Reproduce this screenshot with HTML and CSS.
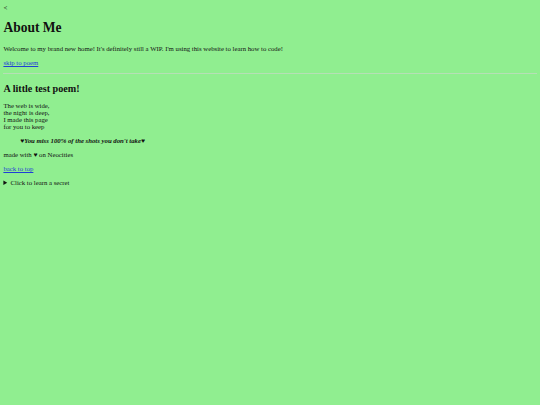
FILE: index.html
```html
<!DOCTYPE html>
<html>
<head>
<meta charset="utf-8">
<link rel="stylesheet" href="styles.css">
</head>
<body class="page">
<div class="back">&lt;</div>
<h1 class="title" id="top">About Me</h1>
<p class="text">Welcome to my brand new home! It's definitely still a WIP. I'm using this website to learn how to code!</p>
<p class="text"><a class="link" href="#poem">skip to poem</a></p>
<hr class="rule">
<h2 class="subtitle" id="poem">A little test poem!</h2>
<p class="text">The web is wide,<br>the night is deep,<br>I made this page<br>for you to keep</p>
<blockquote class="quote"><b><i>♥You miss 100% of the shots you don't take♥</i></b></blockquote>
<p class="text">made with ♥ on Neocities</p>
<p class="text"><a class="link" href="#top">back to top</a></p>
<details class="secret"><summary class="summary">Click to learn a secret</summary><p class="text">Shh!</p></details>
</body>
</html>
```
FILE: styles.css
```css
html { background: #90ee90; }
.page {
  margin: 3.4px;
  padding-top: 1px;
  font-family: "Liberation Serif", "Times New Roman", serif;
  font-size: 6.76px;
  color: #111;
  background: #90ee90;
}
.back { line-height: normal; }
.title { font-size: 2em; margin: 0.67em 0; font-weight: bold; }
.subtitle { font-size: 1.5em; margin: 0.85em 0; font-weight: bold; }
.text { margin: 1.02em 0; }
.link { color: #1f3fd6; text-decoration: underline; }
.rule {
  border: none;
  border-top: 1px solid #b6dfb6;
  height: 0;
  margin: 0.5em 0;
}
.quote { margin: 1.02em 16.9px; }
.secret { display: block; }
.summary { display: list-item; }
```
